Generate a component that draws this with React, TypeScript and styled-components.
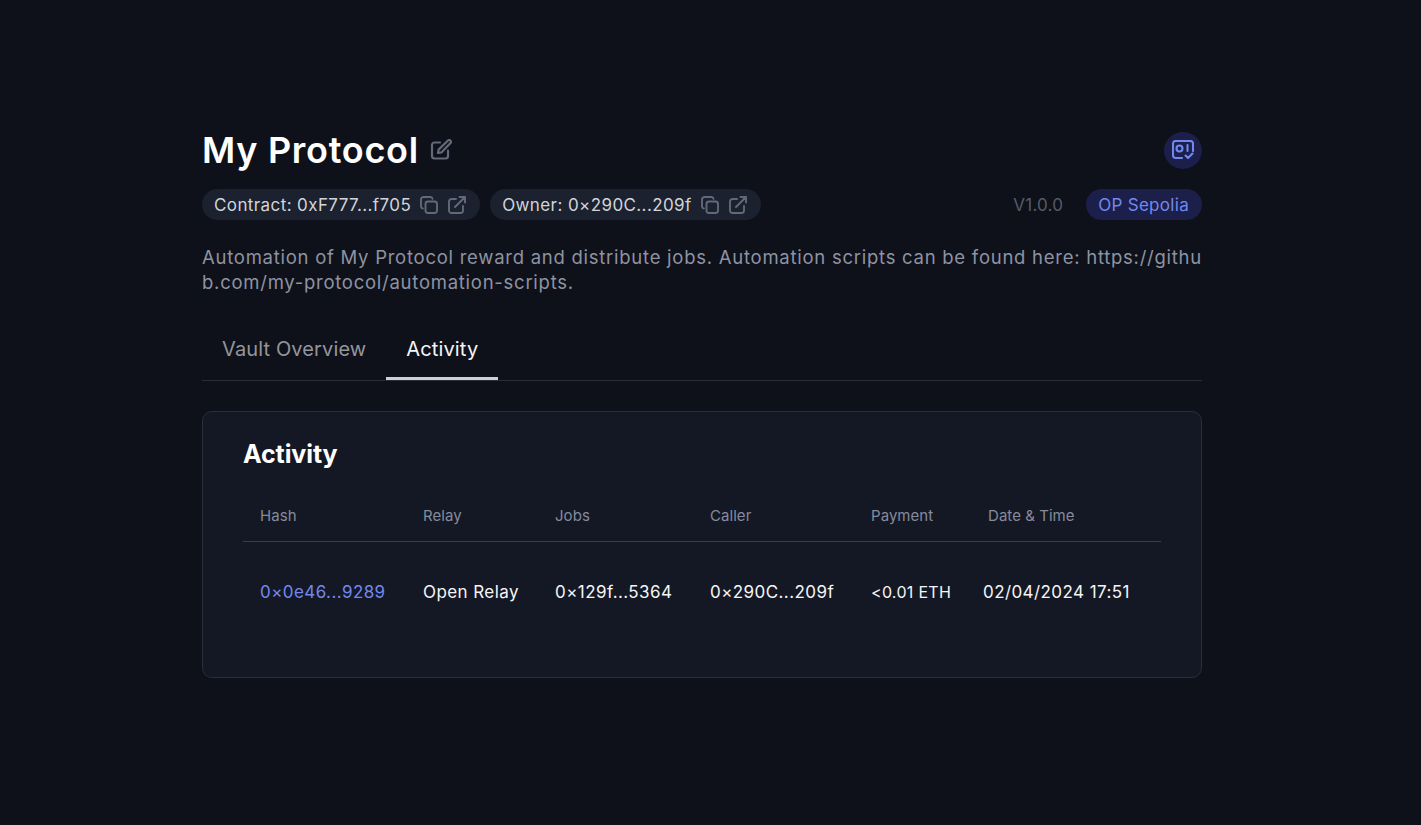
import React from "react";
import styled, { createGlobalStyle } from "styled-components";

const GlobalStyle = createGlobalStyle`
  html, body {
    margin: 0;
    padding: 0;
    background: #0e1119;
    font-family: "Inter", "Liberation Sans", sans-serif;
  }
`;

const Page = styled.main`
  width: 1000px;
  margin-left: 202px;
  padding: 128px 0 100px;
  min-height: 825px;
  box-sizing: border-box;
`;

const HeaderRow = styled.div`
  display: flex;
  align-items: center;
  justify-content: space-between;
  height: 44px;
`;

const TitleGroup = styled.div`
  display: flex;
  align-items: center;
  gap: 11px;
`;

const Title = styled.h1`
  margin: 0;
  font-size: 36px;
  line-height: 44px;
  font-weight: 600;
  letter-spacing: 0.72px;
  color: #ffffff;
`;

const IconCircle = styled.div`
  width: 38px;
  height: 37px;
  border-radius: 50%;
  background: #1c1f4a;
  color: #7288ee;
  display: flex;
  align-items: center;
  justify-content: center;
`;

const MetaRow = styled.div`
  display: flex;
  align-items: center;
  justify-content: space-between;
  margin-top: 17px;
`;

const ChipGroup = styled.div`
  display: flex;
  gap: 10px;
`;

const Chip = styled.div`
  display: flex;
  align-items: center;
  height: 31px;
  padding: 0 14px 0 12px;
  gap: 10px;
  border-radius: 16px;
  background: #1b212e;
  color: #d2d4da;
  font-size: 17px;
  letter-spacing: 0.4px;
  white-space: nowrap;
`;

const ChipIcon = styled.span<{ $first?: boolean }>`
  display: flex;
  color: #636979;
  margin-left: ${(p) => (p.$first ? "-1px" : "0")};
`;

const MetaRight = styled.div`
  display: flex;
  align-items: center;
  gap: 23px;
`;

const Version = styled.span`
  font-size: 17px;
  letter-spacing: 0.2px;
  color: #555b69;
`;

const NetworkBadge = styled.span`
  display: flex;
  align-items: center;
  height: 31px;
  padding: 0 13px 0 12px;
  border-radius: 16px;
  background: #1c1f4a;
  color: #7288ee;
  font-size: 17px;
  letter-spacing: 0.3px;
`;

const Description = styled.p`
  margin: 25px 0 0;
  font-size: 18.5px;
  line-height: 25px;
  letter-spacing: 0.74px;
  color: #8e93a3;
  word-break: break-all;
`;

const Tabs = styled.nav`
  display: flex;
  margin-top: 24px;
  height: 62px;
  box-sizing: border-box;
  border-bottom: 1px solid #2a2d36;
`;

const Tab = styled.div<{ $active?: boolean }>`
  display: flex;
  align-items: center;
  padding: 2px 20px 0;
  height: 61px;
  box-sizing: border-box;
  font-size: 20px;
  letter-spacing: 0.13px;
  color: ${(p) => (p.$active ? "#f5f5f7" : "#94969c")};
  border-bottom: 3px solid ${(p) => (p.$active ? "#ced0d9" : "transparent")};
`;

const Card = styled.section`
  margin-top: 30px;
  height: 267px;
  box-sizing: border-box;
  padding: 25px 40px;
  background: #141824;
  border: 1px solid #2a2e39;
  border-radius: 10px;
`;

const CardTitle = styled.h2`
  margin: 0;
  font-size: 25px;
  line-height: 34px;
  font-weight: 700;
  letter-spacing: -0.1px;
  color: #ffffff;
`;

const columns = "163px 132px 155px 161px 117px 1fr";

const HeadRow = styled.div`
  display: grid;
  grid-template-columns: ${columns};
  align-items: center;
  height: 52px;
  padding: 10px 0 0 17px;
  margin-top: 8px;
  border-bottom: 1px solid #3a3d45;
  font-size: 15px;
  letter-spacing: 0.05px;
  color: #858b9c;
`;

const BodyRow = styled.div`
  display: grid;
  grid-template-columns: ${columns};
  align-items: center;
  height: 100px;
  padding-left: 17px;
  font-size: 17px;
  letter-spacing: 0.42px;
  color: #f5f5f7;
`;

const HashLink = styled.a`
  color: #7288ee;
  text-decoration: none;
`;

const PaymentCell = styled.span`
  font-size: 16px;
  letter-spacing: 0.3px;
  white-space: nowrap;
`;

const DateCell = styled.span`
  margin-left: -5px;
  white-space: nowrap;
`;

const EditIcon = () => (
  <svg width="22" height="22" viewBox="0 0 22 22" fill="none" stroke="#636979" strokeWidth="2.2" strokeLinecap="round" strokeLinejoin="round">
    <path d="M10 3.5H4.5A2.5 2.5 0 0 0 2 6v11a2.5 2.5 0 0 0 2.5 2.5h11A2.5 2.5 0 0 0 18 17v-5.5" />
    <path d="M8 14l.6-3.4L18 1.5a1.6 1.6 0 0 1 2.3 0l.2.2a1.6 1.6 0 0 1 0 2.3L11.4 13.4z" />
  </svg>
);

const CopyIcon = () => (
  <svg width="18" height="18" viewBox="0 0 18 18" fill="none" stroke="currentColor" strokeWidth="1.9" strokeLinecap="round" strokeLinejoin="round">
    <rect x="5.5" y="5.5" width="11.5" height="11.5" rx="2.5" />
    <path d="M12.5 2.8A2.2 2.2 0 0 0 10.5 1H3.5A2.5 2.5 0 0 0 1 3.5v7a2.2 2.2 0 0 0 1.8 2" />
  </svg>
);

const ExternalIcon = () => (
  <svg width="18" height="18" viewBox="0 0 18 18" fill="none" stroke="currentColor" strokeWidth="1.9" strokeLinecap="round" strokeLinejoin="round">
    <path d="M8 3H3.5A2.5 2.5 0 0 0 1 5.5v9A2.5 2.5 0 0 0 3.5 17h9a2.5 2.5 0 0 0 2.5-2.5V10" />
    <path d="M7 11 17 1M11.5 1H17v5.5" />
  </svg>
);

const VaultIcon = () => (
  <svg width="22" height="20" viewBox="0 0 22 20" fill="none" stroke="currentColor" strokeWidth="2.1" strokeLinecap="round" strokeLinejoin="round">
    <path d="M10 18H3.5A2.5 2.5 0 0 1 1 15.5v-12A2.5 2.5 0 0 1 3.5 1h15A2.5 2.5 0 0 1 21 3.5V11" />
    <circle cx="7.5" cy="8.5" r="3" />
    <path d="M15.5 5v6" />
    <path d="M13.5 15.5l2.5 2.5 4.5-4.5" />
  </svg>
);

export default function App() {
  return (
    <>
      <GlobalStyle />
      <Page>
        <HeaderRow>
          <TitleGroup>
            <Title>My Protocol</Title>
            <EditIcon />
          </TitleGroup>
          <IconCircle>
            <VaultIcon />
          </IconCircle>
        </HeaderRow>
        <MetaRow>
          <ChipGroup>
            <Chip>
              Contract: 0xF777...f705
              <ChipIcon $first><CopyIcon /></ChipIcon>
              <ChipIcon><ExternalIcon /></ChipIcon>
            </Chip>
            <Chip>
              Owner: 0×290C...209f
              <ChipIcon $first><CopyIcon /></ChipIcon>
              <ChipIcon><ExternalIcon /></ChipIcon>
            </Chip>
          </ChipGroup>
          <MetaRight>
            <Version>V1.0.0</Version>
            <NetworkBadge>OP Sepolia</NetworkBadge>
          </MetaRight>
        </MetaRow>
        <Description>
          Automation of My Protocol reward and distribute jobs. Automation scripts can be found here: https://github.com/my-protocol/automation-scripts.
        </Description>
        <Tabs>
          <Tab>Vault Overview</Tab>
          <Tab $active>Activity</Tab>
        </Tabs>
        <Card>
          <CardTitle>Activity</CardTitle>
          <HeadRow>
            <span>Hash</span>
            <span>Relay</span>
            <span>Jobs</span>
            <span>Caller</span>
            <span>Payment</span>
            <span>Date &amp; Time</span>
          </HeadRow>
          <BodyRow>
            <HashLink href="#">0×0e46...9289</HashLink>
            <span>Open Relay</span>
            <span>0×129f...5364</span>
            <span>0×290C...209f</span>
            <PaymentCell>&lt;0.01 ETH</PaymentCell>
            <DateCell>02/04/2024 17:51</DateCell>
          </BodyRow>
        </Card>
      </Page>
    </>
  );
}
